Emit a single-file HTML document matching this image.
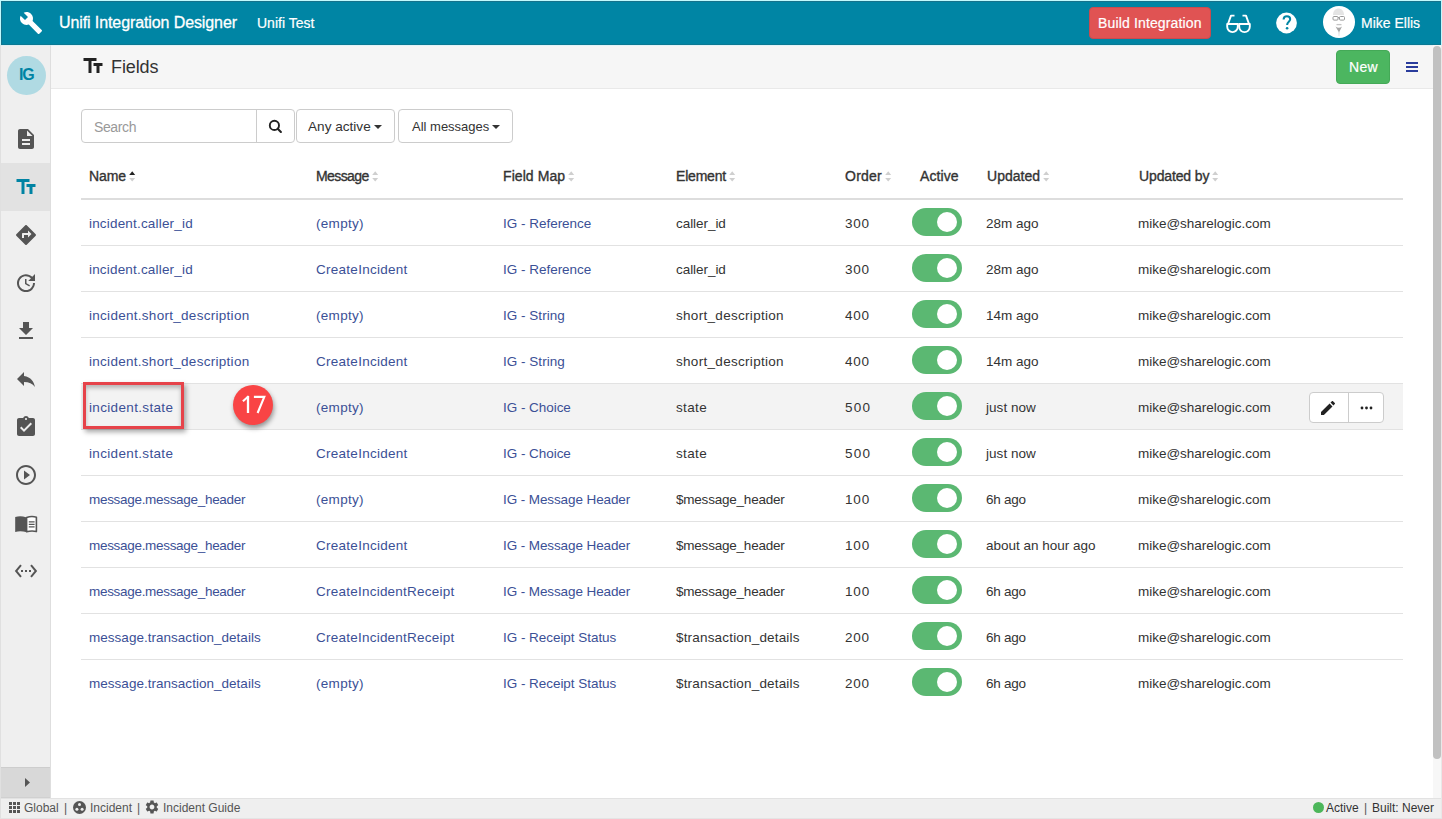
<!DOCTYPE html><html><head><meta charset="utf-8"><style>
*{box-sizing:border-box;margin:0;padding:0}
html,body{width:1442px;height:819px;overflow:hidden;background:#fff;font-family:"Liberation Sans",sans-serif;color:#333}
.abs{position:absolute}
#frame{position:absolute;left:0;top:0;width:1442px;height:819px;background:#c2f9fd}
#hdr{position:absolute;left:1px;top:1px;width:1440px;height:44px;background:#0085a4;color:#fff;box-shadow:inset 1px 1px 0 #16728b,inset -1px 0 0 #107893,inset 0 -1px 0 #0b7993}
#side{position:absolute;left:1px;top:45px;width:50px;height:753px;background:#efefef;border-right:1px solid #dedede}
#content{position:absolute;left:51px;top:45px;width:1382px;height:753px;background:#fff}
#chdr{position:absolute;left:0;top:0;width:1382px;height:44px;background:#f6f6f6;border-bottom:1px solid #e9e9e9}
#scroll{position:absolute;left:1433px;top:45px;width:8px;height:753px;background:#f7f7f7}
#thumb{position:absolute;left:0;top:1px;width:8px;height:713px;background:#c1c1c1;border-radius:4px}
#foot{position:absolute;left:1px;top:798px;width:1440px;height:20px;background:#efefef;border-top:1px solid #e2e2e2;font-size:12px;color:#555}
#bottomrow{position:absolute;left:0;top:818px;width:1442px;height:1px;background:#e4e4e4}
.t{position:absolute;white-space:nowrap;line-height:1}
svg.abs{position:absolute;overflow:visible}
.th{position:absolute;font-weight:normal;font-size:14px;color:#333;white-space:nowrap;line-height:14px;-webkit-text-stroke:0.35px #333}
.row{position:absolute;left:30px;width:1322px;height:46px;border-bottom:1px solid #e2e2e2}
.c{position:absolute;top:1px;line-height:45px;font-size:13.5px;white-space:nowrap;color:#333}
.l{color:#3b5096}
.tog{position:absolute;left:831px;top:8px;width:50px;height:28px;border-radius:14px;background:#5bb872}
.tog::after{content:"";position:absolute;left:25px;top:4px;width:20px;height:20px;border-radius:50%;background:#fff}
.ic{fill:#555}
</style></head><body>
<div id="frame"></div><div class="abs" style="left:0;top:45px;width:1px;height:774px;background:#e0e0e0"></div><div class="abs" style="left:1441px;top:45px;width:1px;height:774px;background:#e8e8e8"></div>
<div id="hdr">
<svg class="abs" style="left:18px;top:10px" width="24" height="24" viewBox="0 0 24 24"><path fill="#fff" d="M22.7 19l-9.1-9.1c.9-2.3.4-5-1.5-6.9-2-2-5-2.4-7.4-1.3L9 6 6 9 1.6 4.7C.4 7.1.9 10.1 2.9 12.1c1.9 1.9 4.6 2.4 6.9 1.5l9.1 9.1c.4.4 1 .4 1.4 0l2.3-2.3c.5-.4.5-1.1.1-1.4z"/></svg>
<div class="t" style="left:58px;top:14px;font-size:16px;color:#fff;letter-spacing:-0.1px;-webkit-text-stroke:0.3px #fff">Unifi Integration Designer</div>
<div class="t" style="left:256px;top:15px;font-size:14px;color:#fff;-webkit-text-stroke:0.2px #fff">Unifi Test</div>
<div class="abs" style="left:1088px;top:6px;width:122px;height:32px;background:#e05353;border:1px solid #c94b4f;border-radius:4px"></div>
<div class="t" style="left:1097px;top:15px;font-size:14px;color:#fff;letter-spacing:0.15px;-webkit-text-stroke:0.2px #fff">Build Integration</div>
<svg class="abs" style="left:1225px;top:13px" width="26" height="20" viewBox="0 0 26 20"><g fill="none" stroke="#fff" stroke-width="1.9" stroke-linejoin="round"><path d="M1.2 10H11.8V12.8A5.3 5.3 0 0 1 1.2 12.8Z"/><path d="M13.2 10H23.8V12.8A5.3 5.3 0 0 1 13.2 12.8Z"/><path d="M1.8 10.5L5 1.6H8.5"/><path d="M23.2 10.5L20 1.6H16.5"/></g></svg>
<svg class="abs" style="left:1273px;top:10px" width="24" height="24" viewBox="0 0 24 24"><circle cx="12.5" cy="12" r="10.4" fill="#fff"/><path d="M9.6 8.6C9.6 6.5 10.9 5.3 12.9 5.3C14.9 5.3 16.2 6.5 16.2 8.2C16.2 10.6 13.1 11 13.1 13.9" fill="none" stroke="#0085a4" stroke-width="2"/><circle cx="13.1" cy="17.3" r="1.3" fill="#0085a4"/></svg>
<svg class="abs" style="left:1322px;top:5px" width="32" height="32" viewBox="0 0 32 32"><circle cx="16" cy="16" r="16" fill="#fff"/><path d="M10 9C10 4.5 13 2.5 15.5 2.5S21 4.5 21 9Z" fill="#e4e4e4"/><rect x="10" y="10.5" width="5" height="3.6" rx="1" fill="none" stroke="#999" stroke-width="1"/><rect x="16.5" y="10.5" width="5" height="3.6" rx="1" fill="none" stroke="#999" stroke-width="1"/><path d="M15 11.6h1.5" stroke="#999" stroke-width="1"/><path d="M13.5 18.6h5" stroke="#c4c4c4" stroke-width="1.3"/><path d="M12.5 20.5Q15.8 23.2 19 20.5L16 26.5Z" fill="#a6a6a6"/><path d="M15.2 26L16.8 26L16.4 30H15.6Z" fill="#e2e2e2"/></svg>
<div class="t" style="left:1360px;top:15px;font-size:14px;color:#fff;-webkit-text-stroke:0.2px #fff">Mike Ellis</div>
</div>
<div id="side">
<div class="abs" style="left:6px;top:10.8px;width:38.5px;height:38.8px;border-radius:50%;background:#b0dae3"></div>
<div class="t" style="left:5px;top:22px;width:39px;text-align:center;font-size:16px;font-weight:bold;color:#0083a3;letter-spacing:-1.3px;text-indent:1.3px">IG</div>
<div class="abs" style="left:0;top:118px;width:49px;height:48px;background:#e2e2e2"></div>
<svg class="abs" style="left:13px;top:82px" width="24" height="24" viewBox="0 0 24 24"><path fill="#555" d="M14 2H6c-1.1 0-1.99.9-1.99 2L4 20c0 1.1.89 2 1.99 2H18c1.1 0 2-.9 2-2V8l-6-6zm2 16H8v-2h8v2zm0-4H8v-2h8v2zm-3-5V3.5L18.5 9H13z"/></svg>
<svg class="abs" style="left:13px;top:130px" width="24" height="24" viewBox="0 0 24 24"><path fill="#0083a3" d="M2.5 4v3h5v12h3V7h5V4h-13zm19 5h-9v3h3v7h3v-7h3V9z"/></svg>
<svg class="abs" style="left:13px;top:178px" width="24" height="24" viewBox="0 0 24 24"><path fill="#555" d="M21.71 11.29l-9-9c-.39-.39-1.02-.39-1.41 0l-9 9c-.39.39-.39 1.02 0 1.41l9 9c.39.39 1.02.39 1.41 0l9-9c.39-.38.39-1.01 0-1.41zM14 14.5V12h-4v3H8v-4c0-.55.45-1 1-1h5V7.5l3.5 3.5-3.5 3.5z"/></svg>
<svg class="abs" style="left:13px;top:226px" width="24" height="24" viewBox="0 0 24 24"><path fill="#555" d="M21 10.12h-6.78l2.74-2.82c-2.73-2.7-7.15-2.8-9.88-.1-2.73 2.71-2.73 7.08 0 9.79s7.15 2.71 9.88 0C18.32 15.65 19 14.08 19 12.1h2c0 1.98-.88 4.55-2.64 6.29-3.51 3.48-9.21 3.48-12.72 0-3.5-3.47-3.53-9.11-.02-12.58s9.14-3.47 12.65 0L21 3v7.12zM12.5 8v4.25l3.5 2.08-.72 1.21L11 13V8h1.5z"/></svg>
<svg class="abs" style="left:13px;top:274px" width="24" height="24" viewBox="0 0 24 24"><path fill="#555" d="M19 9h-4V3H9v6H5l7 7 7-7zM5 18v2h14v-2H5z"/></svg>
<svg class="abs" style="left:13px;top:322px" width="24" height="24" viewBox="0 0 24 24"><path fill="#555" d="M10 9V5l-7 7 7 7v-4.1c5 0 8.5 1.6 11 5.1-1-5-4-10-11-11z"/></svg>
<svg class="abs" style="left:13px;top:370px" width="24" height="24" viewBox="0 0 24 24"><path fill="#555" d="M19 3h-4.18C14.4 1.84 13.3 1 12 1c-1.3 0-2.4.84-2.82 2H5c-1.1 0-2 .9-2 2v14c0 1.1.9 2 2 2h14c1.1 0 2-.9 2-2V5c0-1.1-.9-2-2-2zm-7 0c.55 0 1 .45 1 1s-.45 1-1 1-1-.45-1-1 .45-1 1-1zm-2 14l-4-4 1.41-1.41L10 14.17l6.59-6.59L18 9l-8 8z"/></svg>
<svg class="abs" style="left:13px;top:418px" width="24" height="24" viewBox="0 0 24 24"><path fill="#555" d="M10 16.5l6-4.5-6-4.5v9zM12 2C6.48 2 2 6.48 2 12s4.48 10 10 10 10-4.48 10-10S17.52 2 12 2zm0 18c-4.41 0-8-3.59-8-8s3.59-8 8-8 8 3.59 8 8-3.59 8-8 8z"/></svg>
<svg class="abs" style="left:13px;top:469px" width="24" height="24" viewBox="0 0 24 24"><path fill="#555" d="M1.2 3Q6.5 1.4 12 3.2V18Q6.5 16.6 1.2 17.9Z"/><path fill="#fff" stroke="#555" stroke-width="1.6" stroke-linejoin="round" d="M12.6 3.4Q17.8 1.8 22.4 3.2V17.6Q17.8 16.4 12.6 17.8Z"/><path d="M14.8 7.8H20.6M14.8 10.4H20.6M14.8 12.9H20.6" stroke="#555" stroke-width="1.3"/></svg>
<svg class="abs" style="left:13px;top:514px" width="24" height="24" viewBox="0 0 24 24"><path fill="#555" d="M7.77 6.76L6.23 5.48.82 12l5.41 6.52 1.54-1.28L3.42 12l4.35-5.24zM7 13h2v-2H7v2zm10-2h-2v2h2v-2zm-6 2h2v-2h-2v2zm6.77-7.52l-1.54 1.28L20.58 12l-4.35 5.24 1.54 1.28L23.18 12l-5.41-6.52z"/></svg>
<div class="abs" style="left:0;top:722px;width:49px;height:31px;background:#d8d8d8;border-top:1px solid #cdcdcd;border-bottom:1px solid #d0d0d0"></div>
<svg class="abs" style="left:24px;top:733px" width="6" height="9" viewBox="0 0 6 9"><path d="M0 0L5 4.5L0 9z" fill="#555"/></svg>
</div>
<div id="content">
<div id="chdr">
<svg class="abs" style="left:30px;top:9px" width="24" height="24" viewBox="0 0 24 24"><path fill="#222" d="M2.5 4v3h5v12h3V7h5V4h-13zm19 5h-9v3h3v7h3v-7h3V9z"/></svg>
<div class="t" style="left:60px;top:13px;font-size:18px;color:#333;letter-spacing:-0.12px">Fields</div>
<div class="abs" style="left:1285px;top:5px;width:54px;height:34px;background:#4cb660;border:1px solid #44a957;border-radius:4px"></div>
<div class="t" style="left:1298px;top:15px;font-size:14px;color:#fff;letter-spacing:0.3px;-webkit-text-stroke:0.2px #fff">New</div>
<svg class="abs" style="left:1355px;top:17px" width="12" height="10" viewBox="0 0 12 10"><path d="M0 0h12v2H0zM0 4h12v2H0zM0 8h12v2H0z" fill="#2a3c9c"/></svg>
</div>
<div class="abs" style="left:30px;top:64px;width:214px;height:34px;border:1px solid #ccc;border-radius:4px;background:#fff"></div>
<div class="abs" style="left:205px;top:64px;width:1px;height:34px;background:#ccc"></div>
<div class="t" style="left:43px;top:75px;font-size:14px;color:#999;letter-spacing:-0.38px">Search</div>
<svg class="abs" style="left:217px;top:75px" width="14" height="14" viewBox="0 0 14 14"><circle cx="6.4" cy="5.4" r="4.6" fill="none" stroke="#222" stroke-width="1.9"/><path d="M9.7 8.7L12.9 11.9" stroke="#222" stroke-width="2.1" stroke-linecap="round"/></svg>
<div class="abs" style="left:245px;top:64px;width:99px;height:34px;border:1px solid #ccc;border-radius:4px;background:#fff"></div>
<div class="t" style="left:257px;top:75px;font-size:13.6px;color:#333">Any active</div>
<svg class="abs" style="left:323px;top:80px" width="8" height="4" viewBox="0 0 8 4"><path d="M0 0h8L4 4z" fill="#333"/></svg>
<div class="abs" style="left:347px;top:64px;width:115px;height:34px;border:1px solid #ccc;border-radius:4px;background:#fff"></div>
<div class="t" style="left:361px;top:75px;font-size:13px;color:#333">All messages</div>
<svg class="abs" style="left:441px;top:80px" width="8" height="4" viewBox="0 0 8 4"><path d="M0 0h8L4 4z" fill="#333"/></svg>
<div class="th" style="left:38px;top:124px"><span style="letter-spacing:-0.133px;">Name</span><svg style="display:inline-block;vertical-align:top;position:relative;top:2px;margin-left:3px" width="7" height="11" viewBox="0 0 7 11"><path d="M0.2 3.9L3.2 0.3L6.2 3.9z" fill="#222"/><path d="M0.2 7L3.2 10.6L6.2 7z" fill="#cfcfcf"/></svg></div>
<div class="th" style="left:265px;top:124px"><span style="letter-spacing:-0.6px;">Message</span><svg style="display:inline-block;vertical-align:top;position:relative;top:2px;margin-left:3px" width="7" height="11" viewBox="0 0 7 11"><path d="M0.2 3.9L3.2 0.3L6.2 3.9z" fill="#cfcfcf"/><path d="M0.2 7L3.2 10.6L6.2 7z" fill="#cfcfcf"/></svg></div>
<div class="th" style="left:452px;top:124px"><span style="letter-spacing:0.075px;">Field Map</span><svg style="display:inline-block;vertical-align:top;position:relative;top:2px;margin-left:3px" width="7" height="11" viewBox="0 0 7 11"><path d="M0.2 3.9L3.2 0.3L6.2 3.9z" fill="#cfcfcf"/><path d="M0.2 7L3.2 10.6L6.2 7z" fill="#cfcfcf"/></svg></div>
<div class="th" style="left:625px;top:124px"><span style="letter-spacing:-0.2px;">Element</span><svg style="display:inline-block;vertical-align:top;position:relative;top:2px;margin-left:3px" width="7" height="11" viewBox="0 0 7 11"><path d="M0.2 3.9L3.2 0.3L6.2 3.9z" fill="#cfcfcf"/><path d="M0.2 7L3.2 10.6L6.2 7z" fill="#cfcfcf"/></svg></div>
<div class="th" style="left:794px;top:124px"><span style="letter-spacing:0.25px;">Order</span><svg style="display:inline-block;vertical-align:top;position:relative;top:2px;margin-left:3px" width="7" height="11" viewBox="0 0 7 11"><path d="M0.2 3.9L3.2 0.3L6.2 3.9z" fill="#cfcfcf"/><path d="M0.2 7L3.2 10.6L6.2 7z" fill="#cfcfcf"/></svg></div>
<div class="th" style="left:869px;top:124px"><span style="letter-spacing:0.1px;">Active</span></div>
<div class="th" style="left:936px;top:124px"><span style="letter-spacing:0.033px;">Updated</span><svg style="display:inline-block;vertical-align:top;position:relative;top:2px;margin-left:3px" width="7" height="11" viewBox="0 0 7 11"><path d="M0.2 3.9L3.2 0.3L6.2 3.9z" fill="#cfcfcf"/><path d="M0.2 7L3.2 10.6L6.2 7z" fill="#cfcfcf"/></svg></div>
<div class="th" style="left:1088px;top:124px"><span style="letter-spacing:-0.133px;">Updated by</span><svg style="display:inline-block;vertical-align:top;position:relative;top:2px;margin-left:3px" width="7" height="11" viewBox="0 0 7 11"><path d="M0.2 3.9L3.2 0.3L6.2 3.9z" fill="#cfcfcf"/><path d="M0.2 7L3.2 10.6L6.2 7z" fill="#cfcfcf"/></svg></div>
<div class="abs" style="left:30px;top:153px;width:1322px;height:2px;background:#ddd"></div>
<div class="row" style="top:155px;">
<div class="c l" style="left:8px;letter-spacing:0.182px;">incident.caller_id</div>
<div class="c l" style="left:235px;letter-spacing:0.3px;">(empty)</div>
<div class="c l" style="left:422px;letter-spacing:-0.015px;">IG - Reference</div>
<div class="c" style="left:595px;letter-spacing:-0.05px;">caller_id</div>
<div class="c" style="left:764px;letter-spacing:0.75px;">300</div>
<div class="tog"></div>
<div class="c" style="left:905px;">28m ago</div>
<div class="c" style="left:1057px;letter-spacing:-0.017px;">mike@sharelogic.com</div>
</div>
<div class="row" style="top:201px;">
<div class="c l" style="left:8px;letter-spacing:0.182px;">incident.caller_id</div>
<div class="c l" style="left:235px;letter-spacing:0.269px;">CreateIncident</div>
<div class="c l" style="left:422px;letter-spacing:-0.015px;">IG - Reference</div>
<div class="c" style="left:595px;letter-spacing:-0.05px;">caller_id</div>
<div class="c" style="left:764px;letter-spacing:0.75px;">300</div>
<div class="tog"></div>
<div class="c" style="left:905px;">28m ago</div>
<div class="c" style="left:1057px;letter-spacing:-0.017px;">mike@sharelogic.com</div>
</div>
<div class="row" style="top:247px;">
<div class="c l" style="left:8px;letter-spacing:0.284px;">incident.short_description</div>
<div class="c l" style="left:235px;letter-spacing:0.3px;">(empty)</div>
<div class="c l" style="left:422px;letter-spacing:0.02px;">IG - String</div>
<div class="c" style="left:595px;letter-spacing:0.3px;">short_description</div>
<div class="c" style="left:764px;letter-spacing:0.75px;">400</div>
<div class="tog"></div>
<div class="c" style="left:905px;">14m ago</div>
<div class="c" style="left:1057px;letter-spacing:-0.017px;">mike@sharelogic.com</div>
</div>
<div class="row" style="top:293px;">
<div class="c l" style="left:8px;letter-spacing:0.284px;">incident.short_description</div>
<div class="c l" style="left:235px;letter-spacing:0.269px;">CreateIncident</div>
<div class="c l" style="left:422px;letter-spacing:0.02px;">IG - String</div>
<div class="c" style="left:595px;letter-spacing:0.3px;">short_description</div>
<div class="c" style="left:764px;letter-spacing:0.75px;">400</div>
<div class="tog"></div>
<div class="c" style="left:905px;">14m ago</div>
<div class="c" style="left:1057px;letter-spacing:-0.017px;">mike@sharelogic.com</div>
</div>
<div class="row" style="top:339px;background:#f3f3f3;">
<div class="c l" style="left:8px;letter-spacing:0.338px;">incident.state</div>
<div class="c l" style="left:235px;letter-spacing:0.3px;">(empty)</div>
<div class="c l" style="left:422px;letter-spacing:-0.04px;">IG - Choice</div>
<div class="c" style="left:595px;letter-spacing:0.35px;">state</div>
<div class="c" style="left:764px;letter-spacing:1.25px;">500</div>
<div class="tog"></div>
<div class="c" style="left:905px;letter-spacing:0.043px;">just now</div>
<div class="c" style="left:1057px;letter-spacing:-0.017px;">mike@sharelogic.com</div>
<div class="abs" style="left:1228px;top:8px;width:75px;height:31px;border:1px solid #ccc;border-radius:4px;background:#fff"></div>
<div class="abs" style="left:1267px;top:8px;width:1px;height:31px;background:#ccc"></div>
<svg class="abs" style="left:1240px;top:17px" width="14" height="14" viewBox="0 0 14 14"><path d="M0 11.1V14h2.9l8.6-8.6-2.9-2.9zM13.8 3.1c.3-.3.3-.8 0-1.1L12 .2c-.3-.3-.8-.3-1.1 0L9.5 1.6l2.9 2.9z" fill="#222"/></svg>
<svg class="abs" style="left:1279px;top:22px" width="13" height="4" viewBox="0 0 13 4"><circle cx="2" cy="2" r="1.4" fill="#222"/><circle cx="6.5" cy="2" r="1.4" fill="#222"/><circle cx="11" cy="2" r="1.4" fill="#222"/></svg>
</div>
<div class="row" style="top:385px;">
<div class="c l" style="left:8px;letter-spacing:0.338px;">incident.state</div>
<div class="c l" style="left:235px;letter-spacing:0.269px;">CreateIncident</div>
<div class="c l" style="left:422px;letter-spacing:-0.04px;">IG - Choice</div>
<div class="c" style="left:595px;letter-spacing:0.35px;">state</div>
<div class="c" style="left:764px;letter-spacing:1.25px;">500</div>
<div class="tog"></div>
<div class="c" style="left:905px;letter-spacing:0.043px;">just now</div>
<div class="c" style="left:1057px;letter-spacing:-0.017px;">mike@sharelogic.com</div>
</div>
<div class="row" style="top:431px;">
<div class="c l" style="left:8px;letter-spacing:-0.305px;">message.message_header</div>
<div class="c l" style="left:235px;letter-spacing:0.3px;">(empty)</div>
<div class="c l" style="left:422px;letter-spacing:-0.1px;">IG - Message Header</div>
<div class="c" style="left:595px;letter-spacing:-0.214px;">$message_header</div>
<div class="c" style="left:764px;letter-spacing:0.85px;">100</div>
<div class="tog"></div>
<div class="c" style="left:905px;letter-spacing:-0.26px;">6h ago</div>
<div class="c" style="left:1057px;letter-spacing:-0.017px;">mike@sharelogic.com</div>
</div>
<div class="row" style="top:477px;">
<div class="c l" style="left:8px;letter-spacing:-0.305px;">message.message_header</div>
<div class="c l" style="left:235px;letter-spacing:0.269px;">CreateIncident</div>
<div class="c l" style="left:422px;letter-spacing:-0.1px;">IG - Message Header</div>
<div class="c" style="left:595px;letter-spacing:-0.214px;">$message_header</div>
<div class="c" style="left:764px;letter-spacing:0.85px;">100</div>
<div class="tog"></div>
<div class="c" style="left:905px;">about an hour ago</div>
<div class="c" style="left:1057px;letter-spacing:-0.017px;">mike@sharelogic.com</div>
</div>
<div class="row" style="top:523px;">
<div class="c l" style="left:8px;letter-spacing:-0.305px;">message.message_header</div>
<div class="c l" style="left:235px;letter-spacing:0.235px;">CreateIncidentReceipt</div>
<div class="c l" style="left:422px;letter-spacing:-0.1px;">IG - Message Header</div>
<div class="c" style="left:595px;letter-spacing:-0.214px;">$message_header</div>
<div class="c" style="left:764px;letter-spacing:0.85px;">100</div>
<div class="tog"></div>
<div class="c" style="left:905px;letter-spacing:-0.26px;">6h ago</div>
<div class="c" style="left:1057px;letter-spacing:-0.017px;">mike@sharelogic.com</div>
</div>
<div class="row" style="top:569px;">
<div class="c l" style="left:8px;letter-spacing:0.023px;">message.transaction_details</div>
<div class="c l" style="left:235px;letter-spacing:0.235px;">CreateIncidentReceipt</div>
<div class="c l" style="left:422px;letter-spacing:-0.039px;">IG - Receipt Status</div>
<div class="c" style="left:595px;letter-spacing:0.179px;">$transaction_details</div>
<div class="c" style="left:764px;letter-spacing:0.75px;">200</div>
<div class="tog"></div>
<div class="c" style="left:905px;letter-spacing:-0.26px;">6h ago</div>
<div class="c" style="left:1057px;letter-spacing:-0.017px;">mike@sharelogic.com</div>
</div>
<div class="row" style="top:615px;border-bottom:0;">
<div class="c l" style="left:8px;letter-spacing:0.023px;">message.transaction_details</div>
<div class="c l" style="left:235px;letter-spacing:0.3px;">(empty)</div>
<div class="c l" style="left:422px;letter-spacing:-0.039px;">IG - Receipt Status</div>
<div class="c" style="left:595px;letter-spacing:0.179px;">$transaction_details</div>
<div class="c" style="left:764px;letter-spacing:0.75px;">200</div>
<div class="tog"></div>
<div class="c" style="left:905px;letter-spacing:-0.26px;">6h ago</div>
<div class="c" style="left:1057px;letter-spacing:-0.017px;">mike@sharelogic.com</div>
</div>
<div class="abs" style="left:32px;top:337px;width:101px;height:47px;border:3px solid #e6434a;box-shadow:2px 3px 5px rgba(0,0,0,.35), inset 0 3px 4px rgba(0,0,0,.25)"></div>
<div class="abs" style="left:182px;top:340px;width:40px;height:40px;border-radius:50%;background:#f94445;box-shadow:1px 3px 5px rgba(0,0,0,.4)"></div>
<svg class="abs" style="left:182px;top:340px" width="40" height="40" viewBox="0 0 40 40"><path d="M15 10.9V28" stroke="#fff" stroke-width="2.3" fill="none"/><path d="M9.9 16.2L15.6 11.2" stroke="#fff" stroke-width="2.1" fill="none"/><path d="M20.9 11.9H31.3L24.6 28" stroke="#fff" stroke-width="2.1" fill="none" stroke-linejoin="miter"/></svg>
</div>
<div class="abs" style="left:1px;top:45px;width:1440px;height:1px;background:rgba(200,240,250,.45)"></div>
<div id="scroll"><div id="thumb"></div></div>
<div id="foot">
<svg class="abs" style="left:8px;top:3px" width="11" height="11" viewBox="0 0 11 11"><path fill="#555" d="M0 0h3v3H0zM4 0h3v3H4zM8 0h3v3H8zM0 4h3v3H0zM4 4h3v3H4zM8 4h3v3H8zM0 8h3v3H0zM4 8h3v3H4zM8 8h3v3H8z"/></svg>
<div class="t" style="left:23px;top:3px;font-size:12px">Global</div>
<div class="t" style="left:63px;top:3px;font-size:12px">|</div>
<svg class="abs" style="left:72px;top:2px" width="13" height="13" viewBox="0 0 13 13"><circle cx="6.5" cy="6.5" r="6.5" fill="#555"/><circle cx="6.5" cy="3.6" r="1.5" fill="#efefef"/><circle cx="3.9" cy="8.2" r="1.5" fill="#efefef"/><circle cx="9.1" cy="8.2" r="1.5" fill="#efefef"/></svg>
<div class="t" style="left:89px;top:3px;font-size:12px">Incident</div>
<div class="t" style="left:136px;top:3px;font-size:12px">|</div>
<svg class="abs" style="left:143.2px;top:0px" width="16" height="16" viewBox="0 0 24 24"><path fill="#555" d="M19.14 12.94c.04-.3.06-.61.06-.94 0-.32-.02-.64-.07-.94l2.03-1.58c.18-.14.23-.41.12-.61l-1.92-3.32c-.12-.22-.37-.29-.59-.22l-2.39.96c-.5-.38-1.03-.7-1.62-.94l-.36-2.54c-.04-.24-.24-.41-.48-.41h-3.84c-.24 0-.43.17-.47.41l-.36 2.54c-.59.24-1.13.57-1.62.94l-2.39-.96c-.22-.08-.47 0-.59.22L2.74 8.87c-.12.21-.08.47.12.61l2.03 1.58c-.05.3-.09.63-.09.94s.02.64.07.94l-2.03 1.58c-.18.14-.23.41-.12.61l1.92 3.32c.12.22.37.29.59.22l2.39-.96c.5.38 1.03.7 1.62.94l.36 2.54c.05.24.24.41.48.41h3.84c.24 0 .44-.17.47-.41l.36-2.54c.59-.24 1.13-.56 1.62-.94l2.39.96c.22.08.47 0 .59-.22l1.92-3.32c.12-.22.07-.47-.12-.61l-2.01-1.58zM12 15.6c-1.98 0-3.6-1.62-3.6-3.6s1.62-3.6 3.6-3.6 3.6 1.62 3.6 3.6-1.62 3.6-3.6 3.6z"/></svg>
<div class="t" style="left:162px;top:3px;font-size:12px">Incident Guide</div>
<div class="abs" style="left:1312px;top:3px;width:11px;height:11px;border-radius:50%;background:#4cb65a"></div>
<div class="t" style="left:1325px;top:3px;font-size:12px;color:#333">Active</div>
<div class="t" style="left:1363px;top:3px;font-size:12px;color:#555">|</div>
<div class="t" style="left:1371px;top:3px;font-size:12px;color:#333">Built: Never</div>
</div>
<div id="bottomrow"></div>
</body></html>
